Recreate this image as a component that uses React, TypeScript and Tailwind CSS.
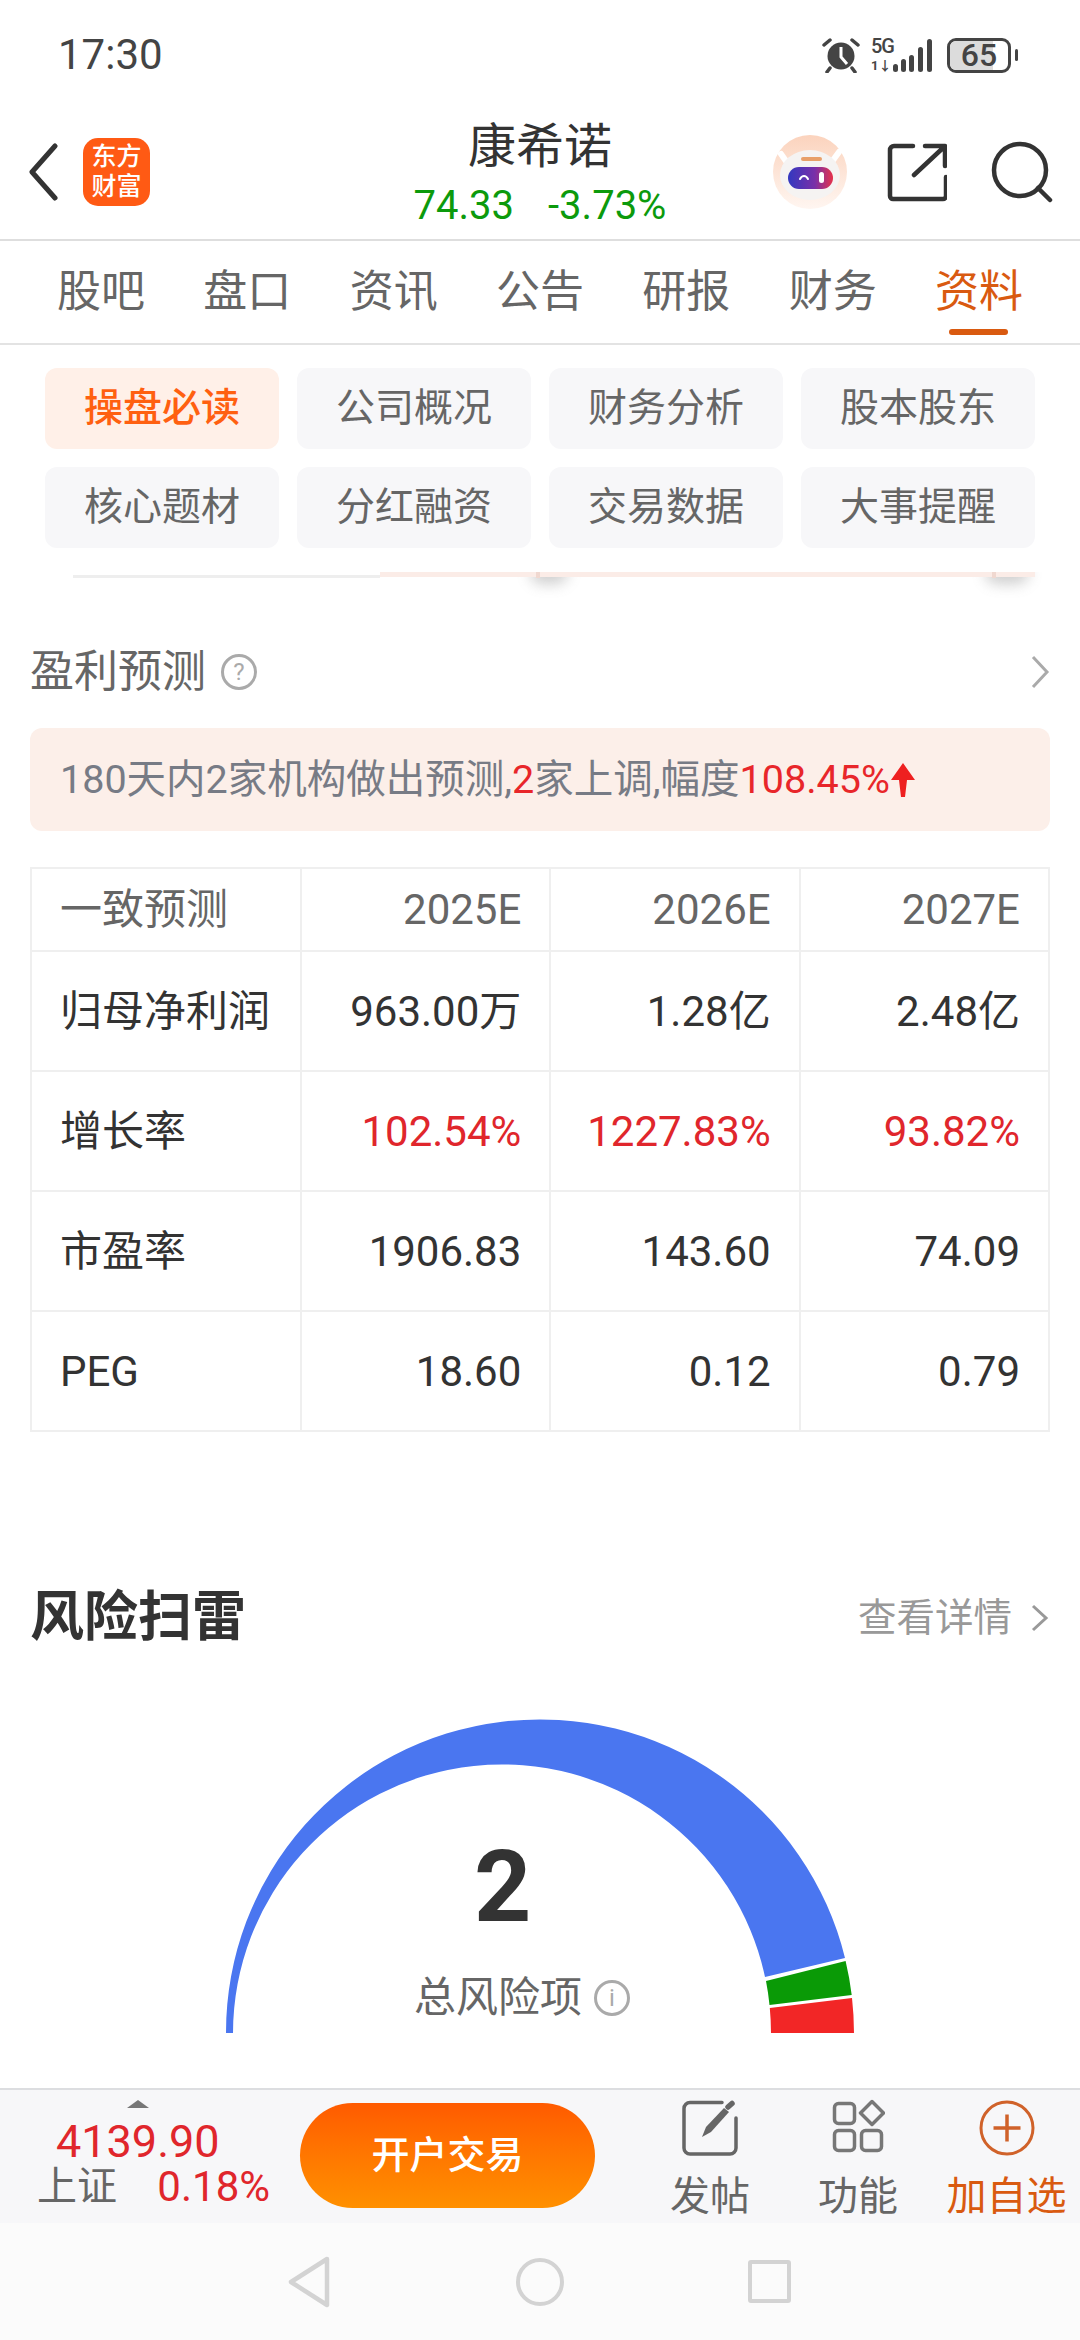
const sans = "font-['Roboto','Noto_Sans_CJK_SC',sans-serif]";

const mainTabs = ["股吧", "盘口", "资讯", "公告", "研报", "财务", "资料"];
const subTabs = ["操盘必读", "公司概况", "财务分析", "股本股东", "核心题材", "分红融资", "交易数据", "大事提醒"];

const rows = [
  { name: "归母净利润", values: ["963.00万", "1.28亿", "2.48亿"], red: false },
  { name: "增长率", values: ["102.54%", "1227.83%", "93.82%"], red: true },
  { name: "市盈率", values: ["1906.83", "143.60", "74.09"], red: false },
  { name: "PEG", values: ["18.60", "0.12", "0.79"], red: false },
];

function StatusBar() {
  return (
    <div className="flex h-[110px] items-center justify-between pl-[58px] pr-[62px]">
      <span className="text-[42px] leading-none text-[#444]">17:30</span>
      <div className="flex items-center">
        <svg width="38" height="36" viewBox="0 0 38 36" className="mr-[11px]">
          <circle cx="19" cy="19" r="13.5" fill="#444" />
          <path d="M19 10v10l6 7" stroke="#fff" strokeWidth="3" fill="none" />
          <path d="M2 8l6-5M36 8l-6-5M8 31l-3 4M30 31l3 4" stroke="#444" strokeWidth="3.5" strokeLinecap="round" />
        </svg>
        <div className="relative h-[34px] w-[20px]">
          <span className="absolute left-0 top-[-1px] text-[20px] font-medium leading-[18px] tracking-[-1px] text-[#444]">5G</span>
          <span className="absolute left-0 top-[21px] text-[13px] font-bold leading-[14px] text-[#444]">1↓</span>
        </div>
        <svg width="41" height="34" viewBox="0 0 41 34" className="mr-[15px]">
          <rect x="2" y="26" width="5" height="8" rx="2.5" fill="#444" />
          <rect x="10" y="21" width="5" height="13" rx="2.5" fill="#444" />
          <rect x="18" y="17" width="5" height="17" rx="2.5" fill="#444" />
          <rect x="27" y="9" width="5" height="25" rx="2.5" fill="#444" />
          <rect x="36" y="1" width="5" height="33" rx="2.5" fill="#444" />
        </svg>
        <div className="relative flex h-[35px] w-[64px] items-center justify-center overflow-hidden rounded-[9px] border-[3px] border-[#444] bg-white">
          <div className="absolute inset-y-0 left-0 w-[43px] bg-[#dcdcdc]" />
          <span className="relative text-[32px] font-medium leading-none text-[#444]">65</span>
        </div>
        <div className="ml-[4px] h-[12px] w-[3px] rounded-full bg-[#444]" />
      </div>
    </div>
  );
}

function Robot() {
  return (
    <svg width="74" height="74" viewBox="0 0 74 74">
      <defs>
        <linearGradient id="halo" x1="0" y1="0" x2="0" y2="1">
          <stop offset="0" stopColor="#fbd3bd" />
          <stop offset="1" stopColor="#fff6f1" />
        </linearGradient>
        <linearGradient id="visor" x1="0" y1="0" x2="1" y2="0">
          <stop offset="0" stopColor="#3238c0" />
          <stop offset="0.6" stopColor="#7a30a8" />
          <stop offset="1" stopColor="#e6324a" />
        </linearGradient>
      </defs>
      <circle cx="37" cy="37" r="37" fill="url(#halo)" />
      <path d="M8 19l7 10M66 17l-8 11" stroke="#fff" strokeWidth="6" strokeLinecap="round" />
      <ellipse cx="37" cy="40" rx="30" ry="25" fill="#f5f3f2" />
      <rect x="28" y="22" width="21" height="4" rx="2" fill="#e8a06a" />
      <rect x="15" y="32" width="45" height="22" rx="11" fill="url(#visor)" />
      <path d="M27 44c2-4 6-4 8 0" stroke="#fff" strokeWidth="2" fill="none" strokeLinecap="round" />
      <rect x="46" y="37" width="5" height="11" rx="2.5" fill="#fff" />
    </svg>
  );
}

function NavBar() {
  return (
    <div className="relative flex h-[131px] items-start border-b-2 border-[#dedede] pl-[28px] pr-[27px] pt-[25px]">
      <svg width="30" height="58" viewBox="0 0 30 58" className="mt-[8px]">
        <path d="M27 3L4 29l23 26" stroke="#333" strokeWidth="5" fill="none" strokeLinecap="round" strokeLinejoin="round" />
      </svg>
      <div className="ml-[25px] mt-[3px] flex h-[68px] w-[67px] flex-col items-center justify-center rounded-[15px] bg-[#ff5a14] text-[25px] font-medium leading-[30px] text-white">
        <span>东方</span>
        <span>财富</span>
      </div>
      <div className="absolute left-[300px] top-[6px] flex w-[480px] flex-col items-center">
        <span className="text-[48px] leading-[62px] text-[#333]">康希诺</span>
        <div className="mt-[6px] flex gap-[34px] text-[40px] leading-[44px] text-[#0c9a0c]">
          <span>74.33</span>
          <span>-3.73%</span>
        </div>
      </div>
      <div className="ml-auto flex items-center">
        <Robot />
        <svg width="60" height="60" viewBox="0 0 60 60" className="ml-[40px]">
          <path d="M26 4H7a4 4 0 0 0-4 4v46a3 3 0 0 0 3 3h50a3 3 0 0 0 3-3V35M38 4h20v20M57 5L27 33" stroke="#333" strokeWidth="4.5" fill="none" strokeLinecap="round" strokeLinejoin="round" />
        </svg>
        <svg width="62" height="62" viewBox="0 0 62 62" className="ml-[44px]">
          <circle cx="29" cy="29" r="26" stroke="#333" strokeWidth="4.5" fill="none" />
          <path d="M47 47l12 12" stroke="#333" strokeWidth="4.5" strokeLinecap="round" />
        </svg>
      </div>
    </div>
  );
}

function MainTabs() {
  return (
    <div className="flex h-[104px] justify-between border-b-2 border-[#e3e3e3] pl-[57px] pr-[57px] pt-[27px]">
      {mainTabs.map((tab) => (
        <div key={tab} className="relative">
          <span className={`block text-[44px] leading-[48px] ${tab === "资料" ? "text-[#d95a10]" : "text-[#666]"}`}>{tab}</span>
          {tab === "资料" && <div className="absolute left-[14px] top-[61px] h-[6px] w-[59px] rounded-full bg-[#d95a10]" />}
        </div>
      ))}
    </div>
  );
}

function SubTabs() {
  return (
    <div className="relative h-[229px]">
      {/* what is left visible of the scrolled card under the sticky tabs */}
      <div className="absolute left-[530px] top-[215px] h-[24px] w-[38px] rounded-full bg-[#888] opacity-40 blur-[7px]" />
      <div className="absolute left-[985px] top-[215px] h-[24px] w-[44px] rounded-full bg-[#888] opacity-40 blur-[7px]" />
      <div className="relative z-10 h-[227px] bg-white px-[45px] pt-[23px]">
        <div className="grid grid-cols-4 gap-[18px]">
          {subTabs.map((tab, i) => (
            <div
              key={tab}
              className={`flex h-[81px] items-center justify-center rounded-[12px] text-[39px] ${
                i === 0 ? "bg-[#fff0e8] font-medium text-[#ff6010]" : "bg-[#f7f7f9] text-[#666]"
              }`}
            >
              {tab}
            </div>
          ))}
        </div>
      </div>
      <div className="absolute left-[73px] top-[230px] h-[3px] w-[307px] bg-[#eeeeee]" />
      <div className="absolute left-[380px] top-[227px] h-[5px] w-[655px] bg-[#fbece7]" />
      <div className="absolute left-[536px] top-[227px] h-[6px] w-[4px] bg-[#f0d8d0]" />
      <div className="absolute left-[992px] top-[227px] h-[6px] w-[4px] bg-[#f0d8d0]" />
    </div>
  );
}

function Forecast() {
  return (
    <div className="px-[30px]">
      <div className="mt-[68px] flex h-[60px] items-center">
        <span className="text-[44px] leading-none text-[#666]">盈利预测</span>
        <div className="ml-[15px] flex h-[36px] w-[36px] items-center justify-center rounded-full border-[3px] border-[#aaa] text-[24px] leading-none text-[#aaa]">?</div>
        <svg width="20" height="36" viewBox="0 0 20 36" className="ml-auto">
          <path d="M3 3l14 15L3 33" stroke="#aaa" strokeWidth="3" fill="none" />
        </svg>
      </div>
      <div className="mt-[26px] flex h-[103px] items-center rounded-[12px] bg-[#fcefe9] pl-[30px] text-[39.5px] text-[#777b85]">
        <span>180天内2家机构做出预测,</span>
        <span className="text-[#e8262a]">2</span>
        <span>家上调,幅度</span>
        <span className="text-[#e8262a]">108.45%</span>
        <svg width="26" height="36" viewBox="0 0 26 36">
          <path d="M13 1L25 18h-8l-2 17h-4L9 18H1z" fill="#ee2020" />
        </svg>
      </div>
      <table className="mt-[36px] w-[1020px] table-fixed border-collapse text-[42px]">
        <thead>
          <tr className="h-[83px] text-[#666]">
            <th className="w-[270px] border-2 border-[#efefef] pl-[28px] text-left font-normal">一致预测</th>
            {["2025E", "2026E", "2027E"].map((year) => (
              <th key={year} className="border-2 border-[#efefef] pr-[28px] text-right font-normal">{year}</th>
            ))}
          </tr>
        </thead>
        <tbody>
          {rows.map((row) => (
            <tr key={row.name} className="h-[120px] text-[#333]">
              <td className="border-2 border-[#efefef] pl-[28px]">{row.name}</td>
              {row.values.map((value) => (
                <td key={value} className={`border-2 border-[#efefef] pr-[28px] text-right ${row.red ? "text-[#e0262c]" : ""}`}>{value}</td>
              ))}
            </tr>
          ))}
        </tbody>
      </table>
    </div>
  );
}

function Gauge() {
  return (
    <div className="relative mx-auto mt-[64px] h-[320px] w-[640px]">
      <svg width="640" height="320" viewBox="220 1716 640 320" className="block">
        <path d="M226 2032A314 313 0 0 1 845 1957L765 1976A269 269 0 0 0 233 2032Z" fill="#4a76f0" />
        <path d="M845.6 1960A314 313 0 0 1 851.7 1994L769.5 2004A269 269 0 0 0 766 1980Z" fill="#0a9a06" />
        <path d="M852 1997A314 313 0 0 1 854 2032H771A269 269 0 0 0 769.8 2007Z" fill="#f22626" />
      </svg>
      <span className="absolute left-[254px] top-[120px] w-[56px] text-center text-[100px] font-bold leading-none text-[#333]">2</span>
      <div className="absolute left-[194px] top-[255px] flex items-center">
        <span className="text-[42px] leading-[52px] text-[#666]">总风险项</span>
        <div className="ml-[12px] flex h-[36px] w-[36px] items-center justify-center rounded-full border-[3px] border-[#aaa] text-[24px] leading-none text-[#aaa]">i</div>
      </div>
    </div>
  );
}

function RiskScan() {
  return (
    <div>
      <div className="mt-[151px] flex items-center justify-between pl-[30px] pr-[30px]">
        <span className="text-[54px] font-bold leading-[70px] text-[#333]">风险扫雷</span>
        <div className="flex items-center">
          <span className="text-[38.5px] text-[#999]">查看详情</span>
          <svg width="20" height="30" viewBox="0 0 20 30" className="ml-[18px]">
            <path d="M3 3l13 12L3 27" stroke="#999" strokeWidth="3" fill="none" />
          </svg>
        </div>
      </div>
      <Gauge />
    </div>
  );
}

function BottomBar() {
  return (
    <div className="flex h-[135px] items-start border-t-2 border-[#dcdde0] bg-[#f7f7f9]">
      <div className="relative ml-[37px] mt-[30px] w-[233px]">
        <div className="absolute left-[90px] top-[-20px] h-0 w-0 border-x-[11px] border-b-[8px] border-x-transparent border-b-[#777]" />
        <div className="pl-[19px] text-[45px] leading-[44px] text-[#e0262c]">4139.90</div>
        <div className="flex items-center justify-between text-[40px] leading-[46px]">
          <span className="text-[#666]">上证</span>
          <span className="text-[42px] text-[#e0262c]">0.18%</span>
        </div>
      </div>
      <div className="ml-[30px] mt-[13px] flex h-[105px] w-[295px] items-center justify-center rounded-full bg-linear-to-b from-[#ff5a00] to-[#ff9000] text-[38px] font-medium text-white">
        开户交易
      </div>
      <div className="ml-[75px] mt-[9px] flex w-[80px] flex-col items-center text-[#666]">
        <svg width="58" height="58" viewBox="0 0 58 58">
          <path d="M41 3.5H9a6 6 0 0 0-6 6V49a6 6 0 0 0 6 6H49a6 6 0 0 0 6-6V19" stroke="#666" strokeWidth="3.5" fill="none" strokeLinecap="round" />
          <path d="M21 38l4-10L43 9l5 4L30 33z" fill="#666" />
          <path d="M47 8l4-3.5" stroke="#666" strokeWidth="5.5" strokeLinecap="round" />
        </svg>
        <span className="mt-[16px] whitespace-nowrap text-[40px] leading-[48px]">发帖</span>
      </div>
      <div className="ml-[68px] mt-[9px] flex w-[80px] flex-col items-center text-[#666]">
        <svg width="54" height="56" viewBox="0 0 54 56">
          <rect x="3.5" y="4.5" width="20" height="20" rx="4" stroke="#777" strokeWidth="3.5" fill="none" />
          <path d="M41 2.5l11.5 11.5L41 25.5 29.5 14z" stroke="#777" strokeWidth="3.5" fill="none" strokeLinejoin="round" />
          <rect x="3.5" y="31.5" width="20" height="20" rx="4" stroke="#777" strokeWidth="3.5" fill="none" />
          <rect x="30.5" y="31.5" width="20" height="20" rx="4" stroke="#777" strokeWidth="3.5" fill="none" />
        </svg>
        <span className="mt-[18px] whitespace-nowrap text-[40px] leading-[48px]">功能</span>
      </div>
      <div className="ml-[48px] mt-[9px] flex w-[121px] flex-col items-center text-[#d95a10]">
        <svg width="56" height="58" viewBox="0 0 56 58">
          <circle cx="28" cy="29" r="26" stroke="#d0622a" strokeWidth="3" fill="none" />
          <path d="M28 15.5v27M14.5 29h27" stroke="#d0622a" strokeWidth="3.5" />
        </svg>
        <span className="mt-[16px] whitespace-nowrap text-[40px] leading-[48px]">加自选</span>
      </div>
    </div>
  );
}

function SystemNav() {
  return (
    <div className="flex h-[117px] items-center bg-[#fbfbfb] pl-[287px]">
      <svg width="44" height="52" viewBox="0 0 44 52">
        <path d="M40 3L4 26l36 23z" stroke="#d3d3d3" strokeWidth="4.5" fill="none" strokeLinejoin="round" />
      </svg>
      <div className="ml-[185px] h-[48px] w-[48px] rounded-full border-[4px] border-[#d3d3d3]" />
      <div className="ml-[184px] h-[43px] w-[43px] rounded-[3px] border-[4px] border-[#d3d3d3]" />
    </div>
  );
}

export default function App() {
  return (
    <div className={`flex h-[2340px] w-[1080px] flex-col overflow-hidden bg-white ${sans}`}>
      <StatusBar />
      <NavBar />
      <MainTabs />
      <div className="min-h-0 flex-1 overflow-hidden">
        <SubTabs />
        <Forecast />
        <RiskScan />
      </div>
      <BottomBar />
      <SystemNav />
    </div>
  );
}
